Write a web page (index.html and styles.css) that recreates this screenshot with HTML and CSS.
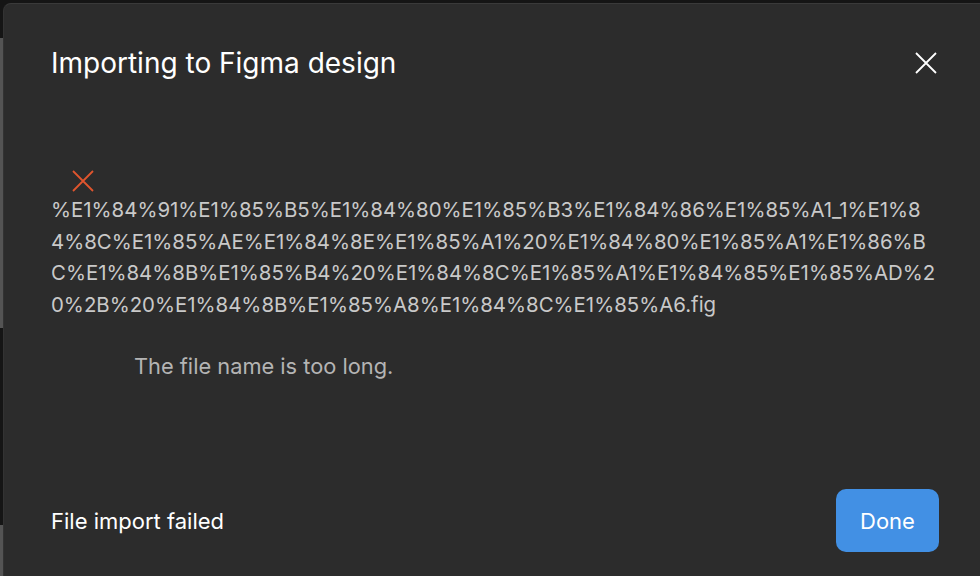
FILE: index.html
```html
<!DOCTYPE html>
<html lang="en">
<head>
<meta charset="utf-8">
<title>Importing to Figma design</title>
<link rel="stylesheet" href="styles.css">
</head>
<body>
<div class="dialog">
  <header class="dialog-header">
    <h1 class="dialog-title">Importing to Figma design</h1>
    <button class="close-btn" aria-label="Close">
      <svg width="22" height="22" viewBox="0 0 22 22"><path d="M1 1L21 21M21 1L1 21" stroke="#ffffff" stroke-width="1.8" fill="none"/></svg>
    </button>
  </header>
  <section class="dialog-body">
    <div class="file-item">
      <svg class="error-icon" width="22" height="22" viewBox="0 0 22 22"><path d="M1 1L21 21M21 1L1 21" stroke="#e0552e" stroke-width="1.8" fill="none"/></svg>
      <div class="file-name">%E1%84%91%E1%85%B5%E1%84%80%E1%85%B3%E1%84%86%E1%85%A1_1%E1%84%8C%E1%85%AE%E1%84%8E%E1%85%A1%20%E1%84%80%E1%85%A1%E1%86%BC%E1%84%8B%E1%85%B4%20%E1%84%8C%E1%85%A1%E1%84%85%E1%85%AD%20%2B%20%E1%84%8B%E1%85%A8%E1%84%8C%E1%85%A6.fig</div>
      <p class="file-error">The file name is too long.</p>
    </div>
  </section>
  <footer class="dialog-footer">
    <span class="status">File import failed</span>
    <button class="done-btn">Done</button>
  </footer>
</div>
</body>
</html>
```
FILE: styles.css
```css
html, body {
  margin: 0;
  height: 100%;
}
body {
  background-color: #151515;
  background-image: linear-gradient(to bottom, #151515 0 38px, #545454 38px 328px, #151515 328px 525px, #545454 525px);
  background-size: 3px 100%;
  background-repeat: no-repeat;
  padding: 3px 0 0 3px;
  box-sizing: border-box;
  display: flex;
  font-family: Inter, "Noto Sans", sans-serif;
  overflow: hidden;
}
.dialog {
  flex: 1;
  background: #2c2c2c;
  border-top: 1px solid #3a3a3a;
  border-left: 1px solid #333333;
  border-top-left-radius: 8px;
  display: flex;
  flex-direction: column;
  padding: 0 41px 24px 47px;
}
.dialog-header {
  display: flex;
  align-items: center;
  justify-content: space-between;
  padding-top: 43px;
}
.dialog-title {
  margin: 0;
  font-size: 28px;
  line-height: 32px;
  font-weight: 400;
  color: #ffffff;
}
.close-btn {
  background: none;
  border: 0;
  padding: 0;
  margin-right: 2px;
  width: 22px;
  height: 22px;
  display: flex;
}
.dialog-body {
  flex: 1;
  padding-top: 91px;
}
.file-item {
  display: flex;
  flex-direction: column;
}
.error-icon {
  margin-left: 21px;
  display: block;
}
.file-name {
  margin-top: 2px;
  font-size: 20.4px;
  line-height: 31.6px;
  color: #c9c9c9;
  word-break: break-all;
}
.file-error {
  margin: 30px 0 0 83px;
  font-size: 21.8px;
  line-height: 32px;
  color: #b4b4b4;
}
.dialog-footer {
  display: flex;
  align-items: center;
  justify-content: space-between;
}
.status {
  font-size: 22px;
  color: #ffffff;
}
.done-btn {
  background: #4290e4;
  color: #ffffff;
  border: 0;
  border-radius: 10px;
  width: 103px;
  height: 63px;
  font-family: inherit;
  font-size: 22px;
}
```
